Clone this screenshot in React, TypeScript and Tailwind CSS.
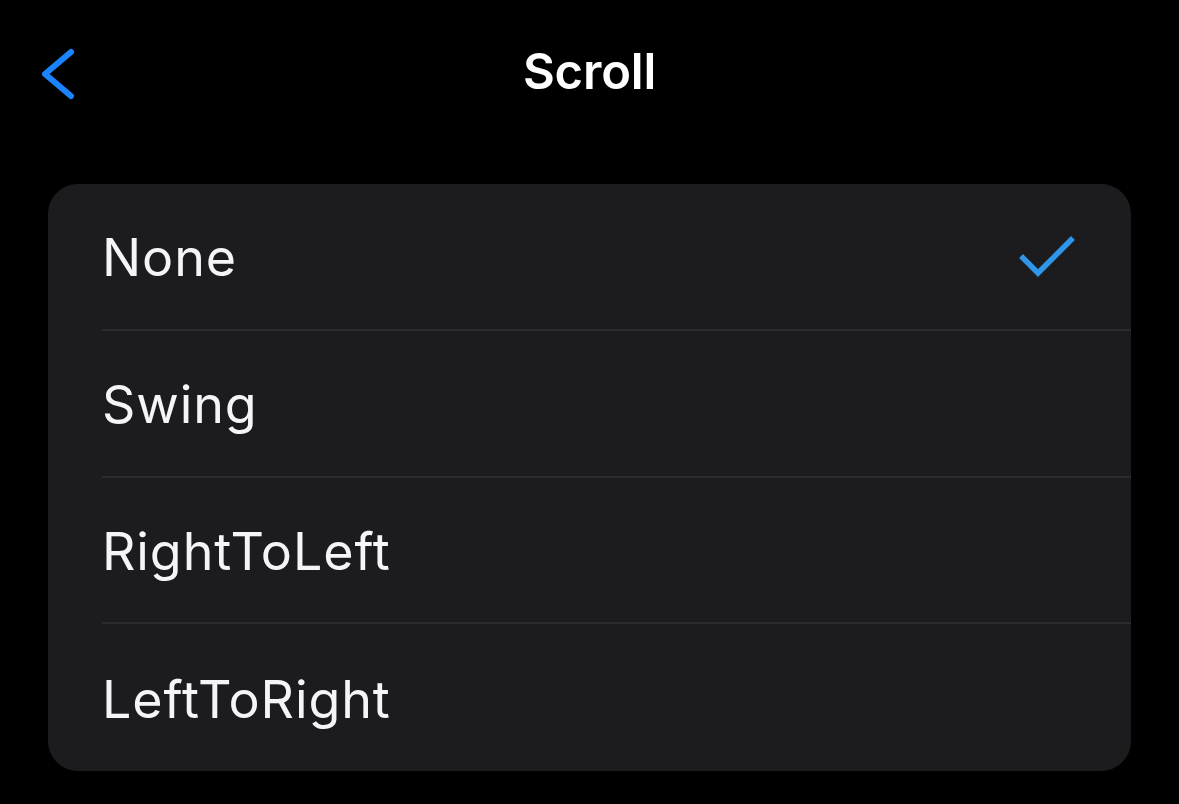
import React, { useState } from 'react';

const options = ['None', 'Swing', 'RightToLeft', 'LeftToRight'];

const App: React.FC = () => {
  const [selected, setSelected] = useState('None');

  return (
    <div className="w-[1179px] h-[804px] bg-black text-white overflow-hidden" style={{ fontFamily: 'Inter, "Noto Sans", sans-serif' }}>
      <header className="relative h-[146px] flex items-start justify-center">
        <button className="absolute left-[36px] top-[44px] w-[46px] h-[60px] flex items-center justify-center">
          <svg width="46" height="60" viewBox="0 0 46 60" fill="none">
            <path d="M35 8 L9 30 L35 52" stroke="#1a84ff" strokeWidth="6" strokeLinecap="round" strokeLinejoin="round" />
          </svg>
        </button>
        <h1 className="mt-[42px] text-[49px] leading-[60px] font-semibold tracking-[-0.2px]">Scroll</h1>
      </header>

      <div className="mt-[38px] mx-[48px] rounded-[30px] bg-[#1c1c1e] overflow-hidden">
        {options.map((opt, i) => (
          <div
            key={opt}
            onClick={() => setSelected(opt)}
            className="h-[146.75px] pl-[54px] flex flex-col cursor-pointer"
          >
            <div className="flex-1 flex items-center pr-[56px]">
              <span className="flex-1 text-[52px] leading-none tracking-[0.9px] text-[#f5f5f7] pt-[4px]">{opt}</span>
              {selected === opt && (
                <svg width="56" height="44" viewBox="0 0 56 44" fill="none">
                  <path d="M4 24 L19 39 L52 6" stroke="#2f96ea" strokeWidth="5.5" strokeLinecap="square" />
                </svg>
              )}
            </div>
            {i < options.length - 1 && <div className="h-[2px] bg-[#2c2c2e]" />}
          </div>
        ))}
      </div>
    </div>
  );
};

export default App;
